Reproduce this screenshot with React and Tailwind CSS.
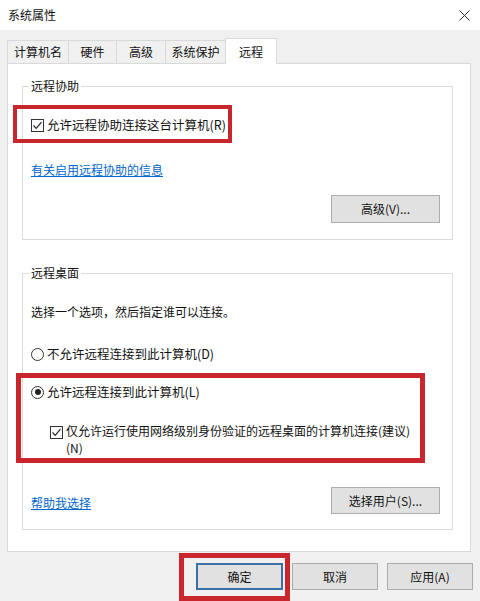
import React from "react";

const font = { fontFamily: '"Noto Sans CJK SC", "Noto Sans", sans-serif' };

const Checkbox = () => (
  <span className="inline-flex h-[13px] w-[13px] shrink-0 items-center justify-center border border-[#333] bg-white">
    <svg width="11" height="11" viewBox="0 0 11 11">
      <path d="M1.5 5.5 L4.2 8.3 L9.5 2.2" fill="none" stroke="#222" strokeWidth="1.2" />
    </svg>
  </span>
);

const Radio = ({ checked }) => (
  <span className="inline-flex h-[13px] w-[13px] shrink-0 items-center justify-center rounded-full border border-[#333] bg-white">
    {checked && <span className="h-[6px] w-[6px] rounded-full bg-[#222]" />}
  </span>
);

const Button = ({ children, primary }) => (
  <button
    className={
      primary
        ? "flex h-[27px] w-[87px] items-center justify-center border-2 border-[#3a72a8] bg-[#e1e1e1] text-[12px] text-[#111]"
        : "flex h-[27px] w-[86px] items-center justify-center border border-[#adadad] bg-[#e1e1e1] text-[12px] text-[#111]"
    }
  >
    {children}
  </button>
);

const tabs = [
  { label: "计算机名", w: "w-[61px]" },
  { label: "硬件", w: "w-[48px]" },
  { label: "高级", w: "w-[49px]" },
  { label: "系统保护", w: "w-[60px]" },
];

export default function App() {
  return (
    <div className="relative h-[601px] w-[480px] overflow-hidden bg-[#f0f0f0] text-[#111]" style={font}>
      {/* title bar */}
      <div className="flex h-[30px] items-center justify-between bg-white pl-[8px] pr-[8px]">
        <span className="text-[12px]">系统属性</span>
        <svg width="11" height="11" viewBox="0 0 11 11" className="mr-[2px]">
          <path d="M0.5 0.5 L10.5 10.5 M10.5 0.5 L0.5 10.5" stroke="#333" strokeWidth="1" />
        </svg>
      </div>

      <div className="pt-[8px]">
        {/* tabs */}
        <div className="flex h-[25px] items-end pl-[7px]">
          {tabs.map((t) => (
            <div
              key={t.label}
              className={`flex h-[23px] ${t.w} items-center justify-center border-l border-t border-[#d9d9d9] bg-[#f0f0f0] text-[12px]`}
            >
              {t.label}
            </div>
          ))}
          <div className="relative z-10 -mb-px flex h-[26px] w-[52px] items-center justify-center border border-b-0 border-[#d9d9d9] bg-white text-[12px]">
            远程
          </div>
        </div>

        {/* panel */}
        <div className="ml-[7px] h-[489px] w-[464px] border border-[#d9d9d9] bg-white pl-[14px] pr-[17px] pt-[14px]">
          <fieldset className="flex h-[162px] flex-col border border-[#dcdcdc] pl-[8px] pr-[12px]">
            <legend className="-ml-[2px] px-[2px] text-[12px] leading-[16px]">远程协助</legend>
            <div className="mt-[22px] flex h-[18px] items-center gap-[3px] text-[12.5px]">
              <Checkbox />
              <span>允许远程协助连接这台计算机(R)</span>
            </div>
            <a className="mt-[28px] h-[16px] self-start text-[12px] leading-[16px] text-[#0066cc] underline">
              有关启用远程协助的信息
            </a>
            <div className="mt-[17px] flex justify-end">
              <button className="flex h-[28px] w-[109px] items-center justify-center border border-[#adadad] bg-[#e1e1e1] text-[12px]">
                高级(V)...
              </button>
            </div>
          </fieldset>

          <fieldset className="mt-[25px] flex h-[265px] flex-col border border-[#dcdcdc] pl-[8px] pr-[12px]">
            <legend className="-ml-[2px] px-[2px] text-[12px] leading-[16px]">远程桌面</legend>
            <div className="mt-[23px] h-[16px] text-[12px] leading-[16px]">选择一个选项，然后指定谁可以连接。</div>
            <div className="mt-[25px] flex h-[18px] items-center gap-[3px] text-[12.5px]">
              <Radio />
              <span>不允许远程连接到此计算机(D)</span>
            </div>
            <div className="mt-[20px] flex h-[18px] items-center gap-[3px] text-[12.5px]">
              <Radio checked />
              <span>允许远程连接到此计算机(L)</span>
            </div>
            <div className="ml-[19px] mt-[21px] flex gap-[3px] text-[12px] leading-[17px]">
              <span className="mt-[2px]">
                <Checkbox />
              </span>
              <span className="w-[350px]">仅允许运行使用网络级别身份验证的远程桌面的计算机连接(建议)(N)</span>
            </div>
            <div className="mt-[31px] flex h-[27px] items-center justify-between">
              <a className="mt-[4px] text-[12px] leading-[16px] text-[#0066cc] underline">帮助我选择</a>
              <button className="flex h-[27px] w-[109px] items-center justify-center border border-[#adadad] bg-[#e1e1e1] text-[12px]">
                选择用户(S)...
              </button>
            </div>
          </fieldset>
        </div>

        {/* dialog buttons */}
        <div className="mt-[11px] flex justify-end gap-[9px] pr-[7px]">
          <Button primary>确定</Button>
          <Button>取消</Button>
          <Button>应用(A)</Button>
        </div>
      </div>

      {/* red annotation boxes */}
      <div className="pointer-events-none absolute left-[13px] top-[105px] h-[38px] w-[219px] border-4 border-[#c9252c]" />
      <div className="pointer-events-none absolute left-[16px] top-[373px] h-[90px] w-[409px] border-[5px] border-[#c9252c]" />
      <div className="pointer-events-none absolute left-[179px] top-[553px] h-[48px] w-[111px] border-[5px] border-[#c9252c]" />
    </div>
  );
}
